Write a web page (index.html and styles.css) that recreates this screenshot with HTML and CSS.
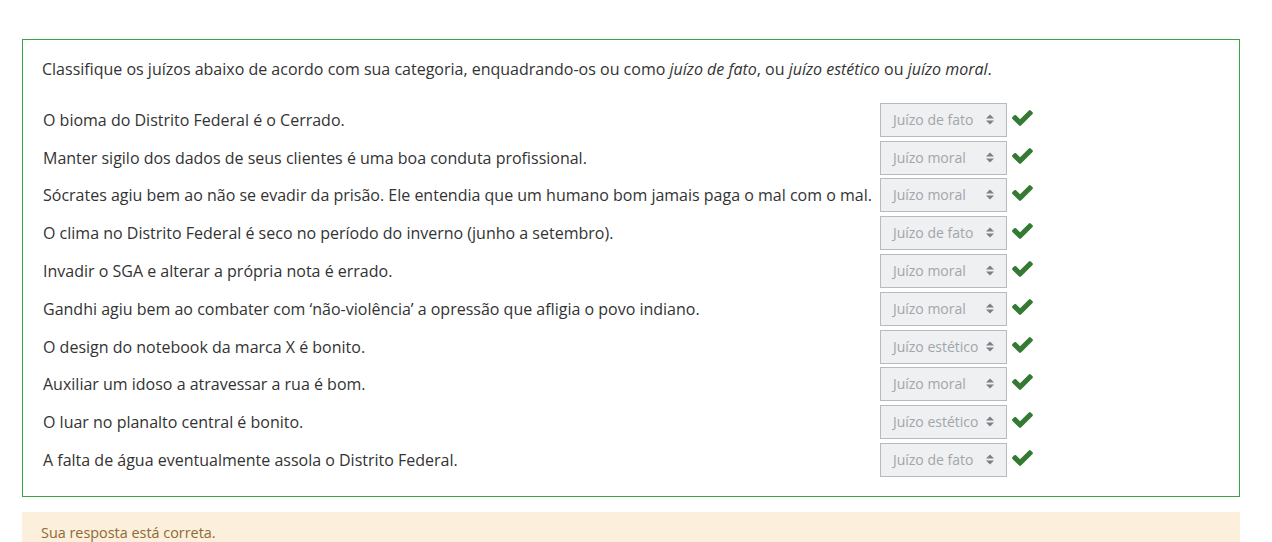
FILE: index.html
```html
<!DOCTYPE html>
<html lang="pt-BR">
<head>
<meta charset="utf-8">
<title>Questão</title>
<link rel="stylesheet" href="styles.css">
</head>
<body>
<div class="page">
  <div class="formulation">
    <p class="qtext">Classifique os juízos abaixo de acordo com sua categoria, enquadrando-os ou como <em>juízo de fato</em>, ou <em>juízo estético</em> ou <em>juízo moral</em>.</p>
    <table class="answer">
      <tbody>
        <tr><td class="text">O bioma do Distrito Federal é o Cerrado.</td><td class="control"><span class="select">Juízo de fato<svg class="arrow" viewBox="0 0 8 11" width="8" height="11"><path d="M0 4.5 4 0.5 8 4.5Z M0 6.5 4 10.5 8 6.5Z"/></svg></span><svg class="check" viewBox="121 334 1550 1188" width="21" height="16"><path d="M1671 566q0 40-28 68l-724 724-136 136q-28 28-68 28t-68-28l-136-136-362-362q-28-28-28-68t28-68l136-136q28-28 68-28t68 28l294 295 656-657q28-28 68-28t68 28l136 136q28 28 28 68z"/></svg></td></tr>
        <tr><td class="text">Manter sigilo dos dados de seus clientes é uma boa conduta profissional.</td><td class="control"><span class="select">Juízo moral<svg class="arrow" viewBox="0 0 8 11" width="8" height="11"><path d="M0 4.5 4 0.5 8 4.5Z M0 6.5 4 10.5 8 6.5Z"/></svg></span><svg class="check" viewBox="121 334 1550 1188" width="21" height="16"><path d="M1671 566q0 40-28 68l-724 724-136 136q-28 28-68 28t-68-28l-136-136-362-362q-28-28-28-68t28-68l136-136q28-28 68-28t68 28l294 295 656-657q28-28 68-28t68 28l136 136q28 28 28 68z"/></svg></td></tr>
        <tr><td class="text">Sócrates agiu bem ao não se evadir da prisão. Ele entendia que um humano bom jamais paga o mal com o mal.</td><td class="control"><span class="select">Juízo moral<svg class="arrow" viewBox="0 0 8 11" width="8" height="11"><path d="M0 4.5 4 0.5 8 4.5Z M0 6.5 4 10.5 8 6.5Z"/></svg></span><svg class="check" viewBox="121 334 1550 1188" width="21" height="16"><path d="M1671 566q0 40-28 68l-724 724-136 136q-28 28-68 28t-68-28l-136-136-362-362q-28-28-28-68t28-68l136-136q28-28 68-28t68 28l294 295 656-657q28-28 68-28t68 28l136 136q28 28 28 68z"/></svg></td></tr>
        <tr><td class="text">O clima no Distrito Federal é seco no período do inverno (junho a setembro).</td><td class="control"><span class="select">Juízo de fato<svg class="arrow" viewBox="0 0 8 11" width="8" height="11"><path d="M0 4.5 4 0.5 8 4.5Z M0 6.5 4 10.5 8 6.5Z"/></svg></span><svg class="check" viewBox="121 334 1550 1188" width="21" height="16"><path d="M1671 566q0 40-28 68l-724 724-136 136q-28 28-68 28t-68-28l-136-136-362-362q-28-28-28-68t28-68l136-136q28-28 68-28t68 28l294 295 656-657q28-28 68-28t68 28l136 136q28 28 28 68z"/></svg></td></tr>
        <tr><td class="text">Invadir o SGA e alterar a própria nota é errado.</td><td class="control"><span class="select">Juízo moral<svg class="arrow" viewBox="0 0 8 11" width="8" height="11"><path d="M0 4.5 4 0.5 8 4.5Z M0 6.5 4 10.5 8 6.5Z"/></svg></span><svg class="check" viewBox="121 334 1550 1188" width="21" height="16"><path d="M1671 566q0 40-28 68l-724 724-136 136q-28 28-68 28t-68-28l-136-136-362-362q-28-28-28-68t28-68l136-136q28-28 68-28t68 28l294 295 656-657q28-28 68-28t68 28l136 136q28 28 28 68z"/></svg></td></tr>
        <tr><td class="text">Gandhi agiu bem ao combater com ‘não-violência’ a opressão que afligia o povo indiano.</td><td class="control"><span class="select">Juízo moral<svg class="arrow" viewBox="0 0 8 11" width="8" height="11"><path d="M0 4.5 4 0.5 8 4.5Z M0 6.5 4 10.5 8 6.5Z"/></svg></span><svg class="check" viewBox="121 334 1550 1188" width="21" height="16"><path d="M1671 566q0 40-28 68l-724 724-136 136q-28 28-68 28t-68-28l-136-136-362-362q-28-28-28-68t28-68l136-136q28-28 68-28t68 28l294 295 656-657q28-28 68-28t68 28l136 136q28 28 28 68z"/></svg></td></tr>
        <tr><td class="text">O design do notebook da marca X é bonito.</td><td class="control"><span class="select">Juízo estético<svg class="arrow" viewBox="0 0 8 11" width="8" height="11"><path d="M0 4.5 4 0.5 8 4.5Z M0 6.5 4 10.5 8 6.5Z"/></svg></span><svg class="check" viewBox="121 334 1550 1188" width="21" height="16"><path d="M1671 566q0 40-28 68l-724 724-136 136q-28 28-68 28t-68-28l-136-136-362-362q-28-28-28-68t28-68l136-136q28-28 68-28t68 28l294 295 656-657q28-28 68-28t68 28l136 136q28 28 28 68z"/></svg></td></tr>
        <tr><td class="text">Auxiliar um idoso a atravessar a rua é bom.</td><td class="control"><span class="select">Juízo moral<svg class="arrow" viewBox="0 0 8 11" width="8" height="11"><path d="M0 4.5 4 0.5 8 4.5Z M0 6.5 4 10.5 8 6.5Z"/></svg></span><svg class="check" viewBox="121 334 1550 1188" width="21" height="16"><path d="M1671 566q0 40-28 68l-724 724-136 136q-28 28-68 28t-68-28l-136-136-362-362q-28-28-28-68t28-68l136-136q28-28 68-28t68 28l294 295 656-657q28-28 68-28t68 28l136 136q28 28 28 68z"/></svg></td></tr>
        <tr><td class="text">O luar no planalto central é bonito.</td><td class="control"><span class="select">Juízo estético<svg class="arrow" viewBox="0 0 8 11" width="8" height="11"><path d="M0 4.5 4 0.5 8 4.5Z M0 6.5 4 10.5 8 6.5Z"/></svg></span><svg class="check" viewBox="121 334 1550 1188" width="21" height="16"><path d="M1671 566q0 40-28 68l-724 724-136 136q-28 28-68 28t-68-28l-136-136-362-362q-28-28-28-68t28-68l136-136q28-28 68-28t68 28l294 295 656-657q28-28 68-28t68 28l136 136q28 28 28 68z"/></svg></td></tr>
        <tr><td class="text">A falta de água eventualmente assola o Distrito Federal.</td><td class="control"><span class="select">Juízo de fato<svg class="arrow" viewBox="0 0 8 11" width="8" height="11"><path d="M0 4.5 4 0.5 8 4.5Z M0 6.5 4 10.5 8 6.5Z"/></svg></span><svg class="check" viewBox="121 334 1550 1188" width="21" height="16"><path d="M1671 566q0 40-28 68l-724 724-136 136q-28 28-68 28t-68-28l-136-136-362-362q-28-28-28-68t28-68l136-136q28-28 68-28t68 28l294 295 656-657q28-28 68-28t68 28l136 136q28 28 28 68z"/></svg></td></tr>
      </tbody>
    </table>
  </div>
  <div class="outcome">Sua resposta está correta.</div>
</div>
</body>
</html>
```
FILE: styles.css
```css
html, body {
  margin: 0;
  padding: 0;
  background: #ffffff;
}
body {
  font-family: "Open Sans", "Liberation Sans", sans-serif;
  font-size: 16px;
  line-height: 1.5;
  color: #333333;
}
.page {
  padding: 39px 32px 0 22px;
}
.formulation {
  border: 1px solid #3aa244;
  padding: 17px 19px 17px 19px;
}
.qtext {
  margin: 0 0 20px 0;
}
.answer {
  border-collapse: collapse;
}
.answer td {
  padding: 1.9px 0;
  vertical-align: middle;
}
.answer td.text {
  padding-left: 1px;
  padding-right: 8px;
  white-space: nowrap;
}
.control {
  display: flex;
  align-items: center;
  gap: 5px;
}
.select {
  box-sizing: border-box;
  width: 127px;
  height: 34px;
  display: flex;
  align-items: center;
  justify-content: space-between;
  padding: 0 12px 1px 12px;
  background: #eef0f2;
  border: 1px solid #b7bbbf;
  font-size: 14px;
  color: #a2a6ab;
}
.arrow {
  fill: #7b8085;
  flex: none;
}
.check {
  fill: #357a32;
  flex: none;
  margin-bottom: 4px;
}
.outcome {
  margin-top: 15px;
  background: #fcefdc;
  color: #8e6a36;
  padding: 10px 19px;
  font-size: 14.4px;
}
```
